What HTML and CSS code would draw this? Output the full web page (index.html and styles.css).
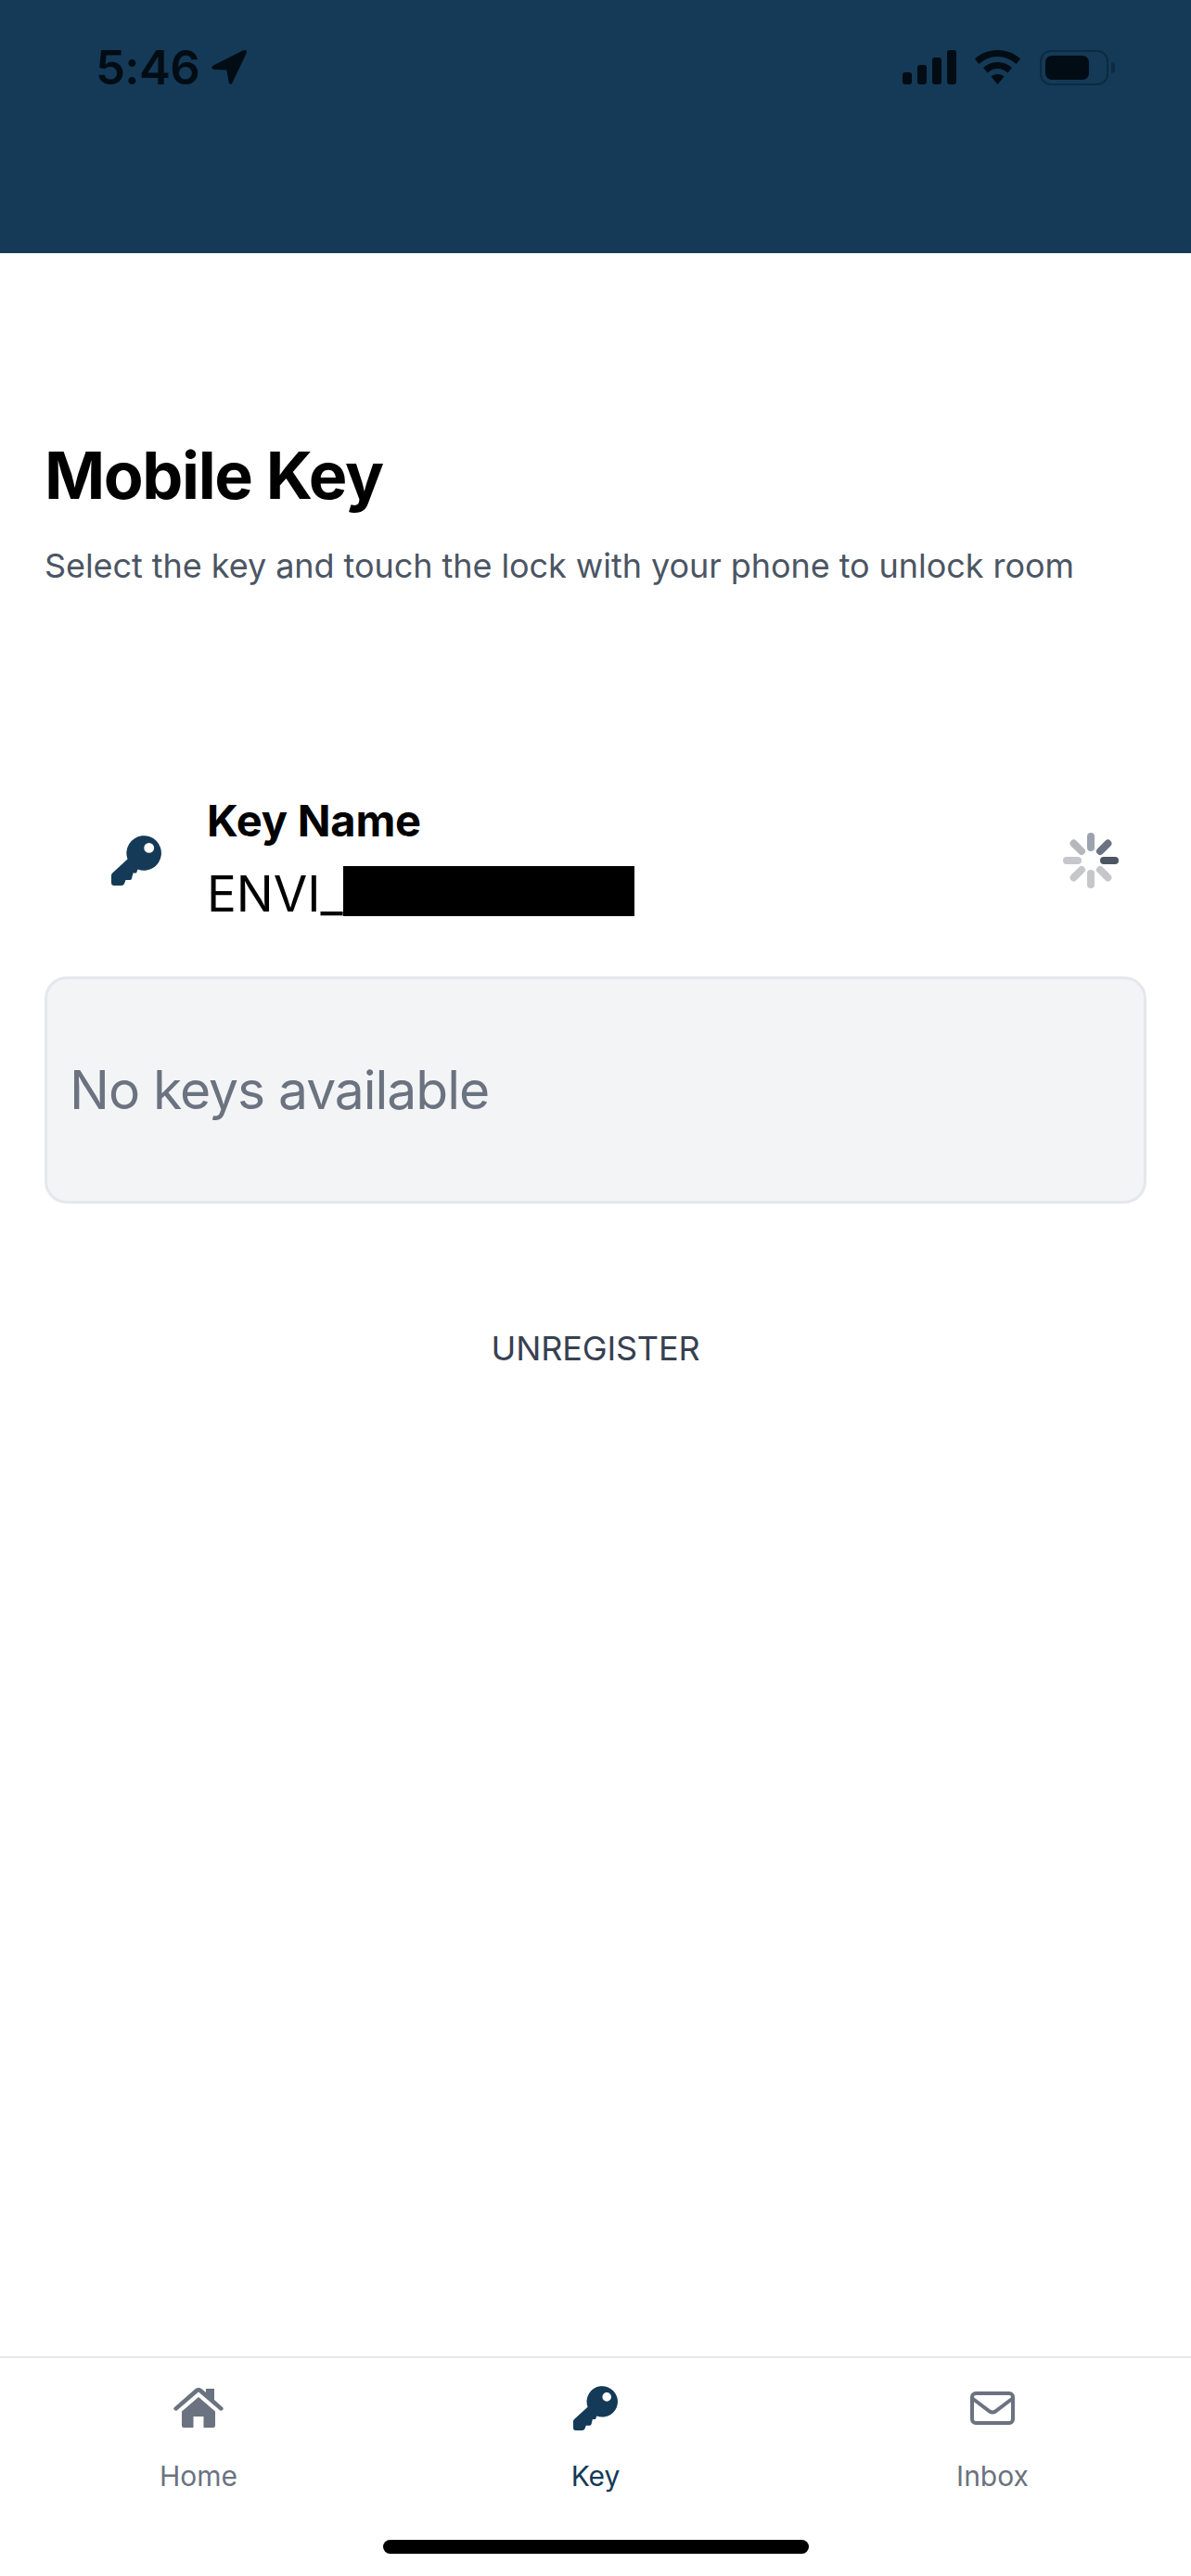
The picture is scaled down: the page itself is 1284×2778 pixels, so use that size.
FILE: index.html
```html
<!DOCTYPE html>
<html lang="en">
<head>
  <meta charset="UTF-8">
  <meta name="viewport" content="width=device-width, initial-scale=1.0">
  <title>Mobile Key</title>
  <link rel="stylesheet" href="styles.css">
</head>
<body>

  <header class="topbar">
    <div class="status">
      <div class="status-left">
        <span class="time">5:46</span>
        <svg class="arrow" viewBox="0 0 39 38"><path d="M3 17 L34 1.5 Q39 -0.5 37.5 4.5 L23 35 Q20.5 39 19 34.5 L17 22 L4 21.5 Q-1 20 3 17 Z"/></svg>
      </div>
      <div class="status-right">
        <svg class="signal" viewBox="0 0 58 37">
          <rect x="0" y="24" width="10" height="13" rx="3"/>
          <rect x="16" y="16" width="10" height="21" rx="3"/>
          <rect x="32" y="8" width="10" height="29" rx="3"/>
          <rect x="48" y="0" width="10" height="37" rx="3"/>
        </svg>
        <svg class="wifi" viewBox="0 0 49 37">
          <path d="M24.5 0 C34 0 42.500 3.500 49 9.500 L44.500 15 C39 10 32 7 24.500 7 C17 7 10 10 4.500 15 L0 9.500 C6.500 3.500 15 0 24.500 0 Z"/>
          <path d="M24.500 13 C30.500 13 35.500 15 40 19 L35.500 24.500 C32.500 22 28.500 20 24.500 20 C20.500 20 16.500 22 13.500 24.500 L9 19 C13.500 15 18.500 13 24.500 13 Z"/>
          <path d="M24.500 26 C27.500 26 29.500 27 31.500 28.500 L24.500 37 L17.500 28.500 C19.500 27 21.500 26 24.500 26 Z"/>
        </svg>
        <div class="battery">
          <div class="battery-body"><div class="battery-level"></div></div>
          <div class="battery-nub"></div>
        </div>
      </div>
    </div>
  </header>

  <main class="content">
    <h1>Mobile Key</h1>
    <p class="intro">Select the key and touch the lock with your phone to unlock room</p>

    <div class="key-row">
      <svg class="key-icon" viewBox="0 0 54 54"><path fill-rule="evenodd" d="M17.500 25.500 L1.200 40.500 Q0 41.700 0 43 V51 Q0 54 3 54 H11 Q13 54 14 52 L15.500 48 H20 Q21.500 48 22 46.500 L23.500 40.500 H27 L28.500 36.600 A18.800 18.800 0 1 0 17.500 25.500 Z M40.700 8 A5.400 5.400 0 1 0 40.701 18.800 A5.400 5.400 0 1 0 40.700 8 Z"/></svg>
      <div class="key-text">
        <div class="key-label">Key Name</div>
        <div class="key-name"><span class="key-prefix">ENVI_</span><span class="redacted"></span></div>
      </div>
      <svg class="spinner" viewBox="0 0 64 64">
        <line class="spoke-1" x1="32" y1="18" x2="32" y2="6"/>
        <line class="spoke-2" x1="42" y1="22" x2="50.400" y2="13.600"/>
        <line class="spoke-3" x1="46" y1="32" x2="58" y2="32"/>
        <line class="spoke-4" x1="42" y1="42" x2="50.400" y2="50.400"/>
        <line class="spoke-4" x1="32" y1="46" x2="32" y2="58"/>
        <line class="spoke-4" x1="22" y1="42" x2="13.600" y2="50.400"/>
        <line class="spoke-4" x1="18" y1="32" x2="6" y2="32"/>
        <line class="spoke-5" x1="22" y1="22" x2="13.600" y2="13.600"/>
      </svg>
    </div>

    <div class="empty-card">No keys available</div>

    <div class="unregister">UNREGISTER</div>
  </main>

  <nav class="tabbar">
    <div class="tabs">
      <div class="tab">
        <svg class="tab-icon home" viewBox="0 0 54 43">
          <path d="M27 0 Q29 0 30.500 1.300 L35 5 V1 H44 V13 L53 21 Q54.500 22.500 53 24 Q51.500 25.500 50 24.300 L27 4.500 L4 24.300 Q2.500 25.500 1 24 Q-0.500 22.500 1 21 L23.500 1.300 Q25 0 27 0 Z"/>
          <path d="M27 10 L45 25.500 V41 Q45 43 43 43 H32.500 V31 H21.500 V43 H11 Q9 43 9 41 V25.500 Z"/>
        </svg>
        <span class="tab-label">Home</span>
      </div>
      <div class="tab active">
        <svg class="tab-icon key" viewBox="0 0 54 54"><path fill-rule="evenodd" d="M17.500 25.500 L1.200 40.500 Q0 41.700 0 43 V51 Q0 54 3 54 H11 Q13 54 14 52 L15.500 48 H20 Q21.500 48 22 46.500 L23.500 40.500 H27 L28.500 36.600 A18.800 18.800 0 1 0 17.500 25.500 Z M40.700 8 A5.400 5.400 0 1 0 40.701 18.800 A5.400 5.400 0 1 0 40.700 8 Z"/></svg>
        <span class="tab-label">Key</span>
      </div>
      <div class="tab">
        <svg class="tab-icon inbox" viewBox="0 0 48 36">
          <rect x="2" y="2" width="44" height="32" rx="4"/>
          <path d="M3 8 L21 21.500 Q24 23.500 27 21.500 L45 8"/>
        </svg>
        <span class="tab-label">Inbox</span>
      </div>
    </div>
    <div class="home-indicator"></div>
  </nav>

</body>
</html>
```

FILE: styles.css
```css
* {
  box-sizing: border-box;
}
body {
  font-family: Inter, "Liberation Sans", sans-serif;
  margin: 0;
  height: 2778px;
  display: flex;
  flex-direction: column;
  background-color: #fff;
  color: #000;
}
.topbar {
  height: 273px;
  flex-shrink: 0;
  background-color: #143a57;
  padding: 53px 82px 0 103px;
}
.status {
  display: flex;
  justify-content: space-between;
  align-items: center;
  height: 39px;
  color: #020c14;
}
.status-left,
.status-right {
  display: flex;
  align-items: center;
}
.time {
  font-size: 51px;
  font-weight: 600;
  line-height: 39px;
  letter-spacing: -0.7px;
}
.arrow {
  width: 40px;
  height: 39px;
  margin-left: 12px;
  fill: #020c14;
}
.signal {
  width: 58px;
  height: 37px;
  fill: #020c14;
}
.wifi {
  width: 49px;
  height: 37px;
  margin-left: 20px;
  fill: #020c14;
}
.battery {
  display: flex;
  align-items: center;
  margin-left: 21px;
}
.battery-body {
  width: 74px;
  height: 38px;
  padding: 4px;
  border: 2px solid #0d2a40;
  border-radius: 12px;
}
.battery-level {
  width: 47px;
  height: 100%;
  border-radius: 7px;
  background-color: #020c14;
}
.battery-nub {
  width: 4px;
  height: 12px;
  margin-left: 3px;
  border-radius: 0 4px 4px 0;
  background-color: #0d2a40;
}

.content {
  flex: 1;
  padding: 0 48px;
}
h1 {
  margin: 198px 0 0;
  font-size: 70px;
  font-weight: 700;
  line-height: 84px;
  letter-spacing: -1.4px;
}
.intro {
  margin: 30px 0 0;
  font-size: 36px;
  line-height: 50px;
  letter-spacing: -0.06px;
  color: #4b5563;
}
.key-row {
  display: flex;
  align-items: center;
  margin-top: 222px;
  padding: 0 28px 0 72px;
}
.key-icon {
  width: 54px;
  height: 54px;
  margin-top: 10px;
  flex-shrink: 0;
  fill: #143a57;
}
.key-text {
  flex: 1;
  margin-left: 49px;
}
.key-label {
  font-size: 47px;
  font-weight: 700;
  line-height: 56px;
  letter-spacing: -0.2px;
}
.key-name {
  display: flex;
  align-items: center;
  height: 54px;
  margin-top: 21px;
  font-size: 53px;
  line-height: 54px;
}
.key-prefix {
  padding-top: 5px;
}
.redacted {
  width: 314px;
  height: 54px;
  background-color: #000;
}
.spinner {
  width: 64px;
  height: 64px;
  margin-top: 10px;
  flex-shrink: 0;
  stroke-width: 8;
  stroke-linecap: round;
}
.spoke-1 { stroke: #9ca3af; }
.spoke-2 { stroke: #6b7280; }
.spoke-3 { stroke: #4b5563; }
.spoke-4 { stroke: #c5c7cb; }
.spoke-5 { stroke: #b5b7ba; }
.empty-card {
  display: flex;
  align-items: center;
  height: 245px;
  margin-top: 65px;
  padding: 0 24px;
  background-color: #f3f4f6;
  border: 3px solid #e5e7eb;
  border-radius: 24px;
  font-size: 57px;
  letter-spacing: -1.05px;
  color: #6b7280;
}
.unregister {
  margin-top: 131px;
  font-size: 36px;
  line-height: 50px;
  letter-spacing: -0.15px;
  text-align: center;
  color: #374151;
}

.tabbar {
  height: 237px;
  flex-shrink: 0;
  border-top: 2px solid #e5e7eb;
}
.tabs {
  display: grid;
  grid-template-columns: repeat(3, 1fr);
}
.tab {
  display: flex;
  flex-direction: column;
  align-items: center;
  height: 196px;
  padding-top: 30px;
  color: #6b7280;
}
.tab.active {
  color: #143a57;
}
.tab-icon {
  height: 48px;
  fill: #6b7280;
}
.tab-icon.key {
  width: 48px;
  fill: #143a57;
}
.tab-icon.home {
  width: 54px;
  padding-top: 2px;
  padding-bottom: 3px;
}
.tab-icon.inbox {
  width: 48px;
  padding: 6px 0 6px;
  fill: none;
  stroke: #6b7280;
  stroke-width: 4;
}
.tab-label {
  margin-top: 29px;
  font-size: 30px;
  line-height: 40px;
}
.home-indicator {
  width: 459px;
  height: 15px;
  margin: 0 auto;
  border-radius: 8px;
  background-color: #000;
}
```
